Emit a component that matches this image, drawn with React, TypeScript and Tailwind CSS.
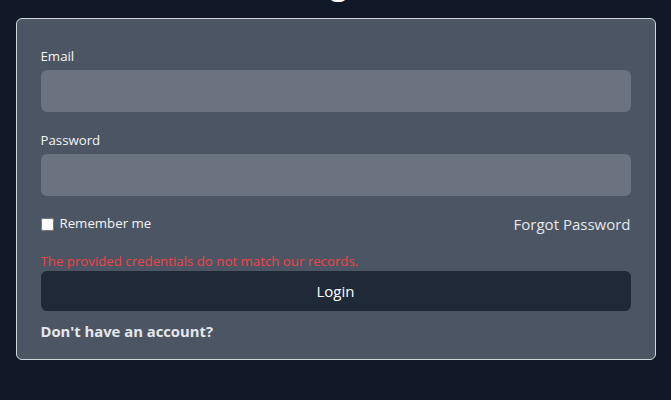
import React from "react";

export default function App() {
  return (
    <div
      className="flex h-[400px] w-full flex-col overflow-hidden bg-[#111827] text-white"
      style={{ fontFamily: '"Segoe UI", "Open Sans", "Noto Sans", sans-serif' }}
    >
      <div className="mx-auto w-[640px] -mt-[34px]">
        <h1 className="mb-4 text-center text-3xl font-bold leading-9 text-white">Login</h1>
        <div className="rounded-md border border-gray-300 bg-[#4b5563] px-6 pt-[27px] pb-[18px]">
          <div className="mb-[18px]">
            <label className="mb-1 block text-[13.25px] leading-5 text-gray-100">Email</label>
            <input type="email" className="block h-[42px] w-full rounded-md bg-[#6b7280] outline-none" />
          </div>
          <div>
            <label className="mb-1 block text-[13.25px] leading-5 text-gray-100">Password</label>
            <input type="password" className="block h-[42px] w-full rounded-md bg-[#6b7280] outline-none" />
          </div>
          <div className="mt-4 flex h-6 items-center justify-between">
            <label className="flex items-center text-[13.25px] text-gray-100">
              <input type="checkbox" className="mr-1.5 h-[13px] w-[13px]" />
              Remember me
            </label>
            <a className="text-[15px] text-gray-200">Forgot Password</a>
          </div>
          <p className="mt-[15px] text-[13.25px] leading-5 text-[#ef4444]">
            The provided credentials do not match our records.
          </p>
          <button className="block h-10 w-full rounded-md bg-[#1f2937] text-[15px] text-white">Login</button>
          <p className="mt-2.5 text-[14.8px] font-bold leading-5 text-gray-200">Don't have an account?</p>
        </div>
      </div>
    </div>
  );
}
